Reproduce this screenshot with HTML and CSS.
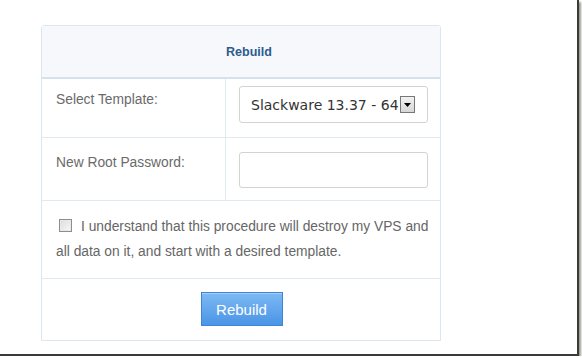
FILE: index.html
```html
<!DOCTYPE html>
<html>
<head>
<meta charset="utf-8">
<link rel="stylesheet" href="styles.css">
</head>
<body>
<div class="frame">
  <div class="card">
    <div class="card-head">Rebuild</div>
    <div class="row row-template">
      <div class="label">Select Template:</div>
      <div class="field">
        <div class="select">
          <span class="select-text">Slackware 13.37 - 64</span>
          <span class="select-btn"><svg width="7" height="4" viewBox="0 0 7 4"><path d="M0 0h7L3.5 4z" fill="#000"/></svg></span>
        </div>
      </div>
    </div>
    <div class="row row-password">
      <div class="label">New Root Password:</div>
      <div class="field"><div class="input"></div></div>
    </div>
    <div class="agree">
      <span class="checkbox"></span>I understand that this procedure will destroy my VPS and all data on it, and start with a desired template.
    </div>
    <div class="actions">
      <button class="btn">Rebuild</button>
    </div>
  </div>
</div>
</body>
</html>
```
FILE: styles.css
```css
html, body {
  margin: 0;
  padding: 0;
  background: #fff;
}
body {
  font-family: "Liberation Sans", Arial, sans-serif;
  font-size: 13.8px;
  color: #666;
}
.frame {
  width: 579px;
  height: 356px;
  box-sizing: border-box;
  background: #fff;
  border-right: 2px solid #3a3a38;
  border-bottom: 2px solid #3a3a38;
  box-shadow: 2px 2px 2px #9a9a94;
  padding: 25px 0 0 41px;
}
.card {
  width: 400px;
  box-sizing: border-box;
  border: 1px solid #dde6ee;
  border-radius: 3px 3px 0 0;
}
.card-head {
  height: 53px;
  box-sizing: border-box;
  background: #f6f8fb;
  border-bottom: 2px solid #d5e2ee;
  display: flex;
  align-items: center;
  justify-content: center;
  font-weight: bold;
  font-size: 12.5px;
  color: #2c5c8f;
  padding: 1px 0 0 16px;
}
.row {
  display: grid;
  grid-template-columns: 184px 1fr;
  border-bottom: 1px solid #e1e9f1;
  box-sizing: border-box;
}
.row-template { height: 59px; }
.row-password { height: 63px; }
.label {
  padding: 13px 0 0 14px;
  border-right: 1px solid #e1e9f1;
  color: #6a6a6a;
}
.row-password .label { padding-top: 17px; }
.field {
  padding: 7px 12px 0 13px;
}
.row-password .field { padding-top: 14px; }
.select {
  height: 37px;
  box-sizing: border-box;
  border: 1px solid #d3d3d3;
  border-radius: 3px;
  display: flex;
  align-items: center;
  padding-left: 11px;
  font-family: "DejaVu Sans", Verdana, sans-serif;
  font-size: 14px;
  color: #333;
}
.select-text {
  white-space: nowrap;
}
.select-btn {
  width: 15px;
  height: 17px;
  box-sizing: border-box;
  border: 1px solid #777;
  background: linear-gradient(#f2f2f2, #d6d6d6);
  display: flex;
  align-items: center;
  justify-content: center;
  margin-left: 1px;
}
.input {
  height: 36px;
  box-sizing: border-box;
  border: 1px solid #d3d3d3;
  border-radius: 3px;
}
.agree {
  height: 78px;
  box-sizing: border-box;
  border-bottom: 1px solid #e1e9f1;
  padding: 13px 5px 0 14px;
  line-height: 25px;
  color: #666;
}
.checkbox {
  display: inline-block;
  width: 11px;
  height: 11px;
  border: 1px solid #8e8e8e;
  background: linear-gradient(135deg, #dcdcdc, #f8f8f8);
  box-shadow: inset 0 0 0 1px #e8e8e8;
  vertical-align: -1px;
  margin: 0 9px 0 3px;
}
.actions {
  height: 61px;
  display: flex;
  justify-content: center;
  padding-top: 13px;
  box-sizing: border-box;
}
.btn {
  width: 82px;
  height: 34px;
  border: 1px solid #3d84d6;
  background: linear-gradient(#7db9f4, #4a95e6);
  color: #fff;
  font-family: "Liberation Sans", Arial, sans-serif;
  font-size: 15px;
  padding: 0;
  margin-left: 1px;
  box-shadow: inset 0 1px 0 rgba(255,255,255,0.3);
}
```
